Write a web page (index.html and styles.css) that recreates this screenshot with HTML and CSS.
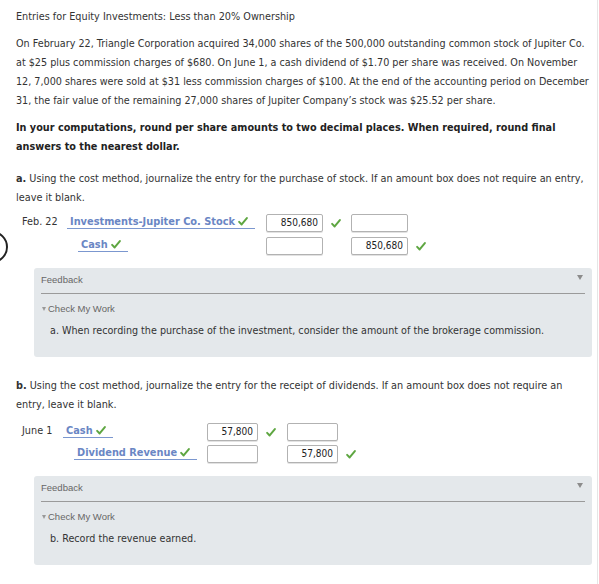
FILE: index.html
```html
<!DOCTYPE html>
<html lang="en">
<head>
  <meta charset="UTF-8">
  <meta name="viewport" content="width=device-width, initial-scale=1.0">
  <title>Entries for Equity Investments</title>
  <link rel="stylesheet" href="styles.css">
</head>
<body>

  <div class="page">
    <h1 class="title">Entries for Equity Investments: Less than 20% Ownership</h1>

    <p class="intro">On February 22, Triangle Corporation acquired 34,000 shares of the 500,000 outstanding common stock of Jupiter Co. at $25 plus commission charges of $680. On June 1, a cash dividend of $1.70 per share was received. On November 12, 7,000 shares were sold at $31 less commission charges of $100. At the end of the accounting period on December 31, the fair value of the remaining 27,000 shares of Jupiter Company’s stock was $25.52 per share.</p>

    <p class="note">In your computations, round per share amounts to two decimal places. When required, round final answers to the nearest dollar.</p>

    <!-- part a -->
    <p class="prompt"><b>a.</b> Using the cost method, journalize the entry for the purchase of stock. If an amount box does not require an entry, leave it blank.</p>

    <div class="journal journal-a">
      <div class="jrow">
        <span class="date">Feb. 22</span>
        <span class="acct"><span class="acct-name">Investments-Jupiter Co. Stock <svg class="check" viewBox="0 0 11 10"><path d="M1.2 5.4 L4 8.3 L9.8 1.2"/></svg></span></span>
        <span class="amt">850,680</span>
        <span class="mark"><svg class="check" viewBox="0 0 11 10"><path d="M1.2 5.4 L4 8.3 L9.8 1.2"/></svg></span>
        <span class="amt"></span>
        <span class="mark"></span>
      </div>
      <div class="jrow">
        <span class="date"></span>
        <span class="acct credit"><span class="acct-name">Cash <svg class="check" viewBox="0 0 11 10"><path d="M1.2 5.4 L4 8.3 L9.8 1.2"/></svg></span></span>
        <span class="amt"></span>
        <span class="mark"></span>
        <span class="amt">850,680</span>
        <span class="mark"><svg class="check" viewBox="0 0 11 10"><path d="M1.2 5.4 L4 8.3 L9.8 1.2"/></svg></span>
      </div>
    </div>

    <div class="feedback">
      <div class="feedback-head">
        <span>Feedback</span>
        <span class="toggle"></span>
      </div>
      <div class="check-work"><span class="tri"></span>Check My Work</div>
      <p class="hint">a. When recording the purchase of the investment, consider the amount of the brokerage commission.</p>
    </div>

    <!-- part b -->
    <p class="prompt prompt-b"><b>b.</b> Using the cost method, journalize the entry for the receipt of dividends. If an amount box does not require an entry, leave it blank.</p>

    <div class="journal journal-b">
      <div class="jrow">
        <span class="date">June 1</span>
        <span class="acct"><span class="acct-name">Cash <svg class="check" viewBox="0 0 11 10"><path d="M1.2 5.4 L4 8.3 L9.8 1.2"/></svg></span></span>
        <span class="amt">57,800</span>
        <span class="mark"><svg class="check" viewBox="0 0 11 10"><path d="M1.2 5.4 L4 8.3 L9.8 1.2"/></svg></span>
        <span class="amt"></span>
        <span class="mark"></span>
      </div>
      <div class="jrow">
        <span class="date"></span>
        <span class="acct credit"><span class="acct-name">Dividend Revenue <svg class="check" viewBox="0 0 11 10"><path d="M1.2 5.4 L4 8.3 L9.8 1.2"/></svg></span></span>
        <span class="amt"></span>
        <span class="mark"></span>
        <span class="amt">57,800</span>
        <span class="mark"><svg class="check" viewBox="0 0 11 10"><path d="M1.2 5.4 L4 8.3 L9.8 1.2"/></svg></span>
      </div>
    </div>

    <div class="feedback feedback-b">
      <div class="feedback-head">
        <span>Feedback</span>
        <span class="toggle"></span>
      </div>
      <div class="check-work"><span class="tri"></span>Check My Work</div>
      <p class="hint">b. Record the revenue earned.</p>
    </div>

    <!-- cursor ring at the left edge -->
    <span class="ring"></span>
  </div>

</body>
</html>
```

FILE: styles.css
```css
body{
  margin: 0;
  background: #fff;
  color: #333;
  font-family: "DejaVu Sans", Verdana, sans-serif;
}
p{
  margin: 0;
}
.page{
  position: relative;
  box-sizing: border-box;
  width: 598px;
  min-height: 584px;
  padding: 7px 4px 0 16px;
  border-right: 1px solid #e6e6e6;
  overflow: hidden;
}
.title{
  margin: 0;
  font-size: 9.7px;
  font-weight: normal;
  line-height: 19px;
}
.intro{
  margin-top: 8px;
  font-size: 9.65px;
  line-height: 19px;
}
.note{
  margin-top: 8px;
  font-size: 9.7px;
  font-weight: bold;
  line-height: 19px;
  color: #222;
}
.prompt{
  margin-top: 13px;
  font-family: "DejaVu Sans Condensed", "DejaVu Sans", Tahoma, sans-serif;
  font-stretch: condensed;
  font-size: 10.8px;
  line-height: 19px;
}
.prompt-b{
  margin-top: 19px;
}

/* journal rows */
.journal{
  margin-top: 7px;
  margin-left: 6px;
  display: flex;
  flex-direction: column;
  gap: 5px;
}
.journal-b{
  margin-top: 9px;
  gap: 4px;
}
.jrow{
  display: flex;
  align-items: flex-start;
}
.date{
  font-size: 9.7px;
  line-height: 15px;
  width: 45px;
}
.journal-b .date{
  width: 41px;
}
.acct{
  display: flex;
  align-items: flex-start;
  width: 199px;
  height: 18px;
}
.journal-b .acct{
  width: 144px;
}
.acct.credit{
  padding-left: 11px;
  box-sizing: border-box;
}
.acct-name{
  display: flex;
  align-items: center;
  gap: 3px;
  height: 14px;
  padding: 0 7px 0 3px;
  border-bottom: 1px solid #7b97cf;
  color: #6a86c4;
  font-size: 9.8px;
  font-weight: bold;
  white-space: nowrap;
}
.amt{
  box-sizing: border-box;
  width: 57px;
  height: 18px;
  padding-right: 4px;
  border: 1px solid #b2b2b2;
  border-radius: 2px;
  box-shadow: 0 1px 0 #e2e2e2;
  background: #fff;
  text-align: right;
  font-family: "DejaVu Sans Condensed", "DejaVu Sans", Tahoma, sans-serif;
  font-stretch: condensed;
  font-size: 10px;
  line-height: 16px;
  color: #222;
}
.journal-b .amt{
  width: 51px;
}
.mark{
  width: 28px;
  height: 18px;
  padding-left: 8px;
  box-sizing: border-box;
  display: flex;
  align-items: center;
}
.journal-b .mark{
  width: 29px;
}
.check{
  width: 10px;
  height: 9px;
  flex: none;
}
.check path{
  fill: none;
  stroke: #5ea641;
  stroke-width: 2.2;
  stroke-linecap: round;
  stroke-linejoin: round;
}

/* feedback panel */
.feedback{
  margin: 13px 1px 0 18px;
  padding: 0 7px 18px;
  background: #e4e8eb;
  border-radius: 3px;
}
.feedback-b{
  margin-top: 13px;
}
.feedback-head{
  display: flex;
  justify-content: space-between;
  padding: 6px 2px 7px 0;
  border-bottom: 1px solid #9a9a9a;
  font-family: "Liberation Sans", Arial, sans-serif;
  font-size: 9.5px;
  line-height: 12px;
  color: #666;
}
.toggle{
  align-self: flex-start;
  margin-top: 1px;
  width: 0;
  height: 0;
  border-left: 3.5px solid transparent;
  border-right: 3.5px solid transparent;
  border-top: 5px solid #8c8c8c;
}
.check-work{
  display: flex;
  align-items: center;
  gap: 2px;
  margin-top: 9px;
  margin-left: 1px;
  font-family: "Liberation Sans", Arial, sans-serif;
  font-size: 9.5px;
  line-height: 12px;
  color: #666;
}
.tri{
  width: 0;
  height: 0;
  border-left: 2.5px solid transparent;
  border-right: 2.5px solid transparent;
  border-top: 4px solid #999;
}
.hint{
  margin-top: 8px;
  padding-left: 9px;
  font-size: 9.6px;
  line-height: 16px;
  color: #333;
}

.ring{
  position: absolute;
  left: -24px;
  top: 231px;
  width: 28px;
  height: 28px;
  border: 2px solid #222;
  border-radius: 50%;
}
```
